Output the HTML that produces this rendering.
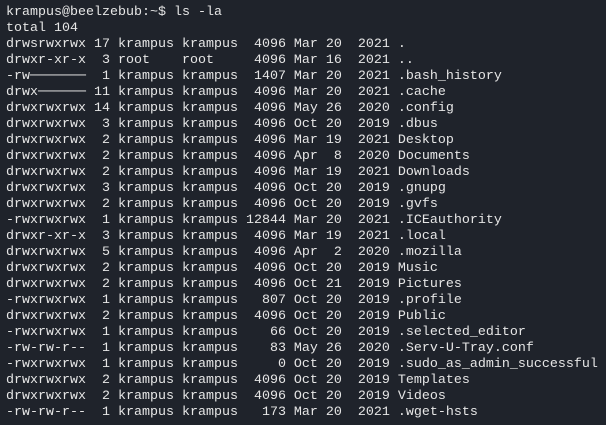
<!DOCTYPE html>
<html><head><meta charset="utf-8"><style>
html,body{margin:0;padding:0;background:#1f232b;width:606px;height:425px;overflow:hidden}
pre{margin:0;padding:5px 0 0 6px;font-family:"Liberation Mono","DejaVu Sans Mono",monospace;font-size:13.33px;line-height:16px;color:#e6e6e6}
</style></head><body><pre>krampus@beelzebub:~$ ls -la
total 104
drwsrwxrwx 17 krampus krampus  4096 Mar 20  2021 .
drwxr-xr-x  3 root    root     4096 Mar 16  2021 ..
-rw───────  1 krampus krampus  1407 Mar 20  2021 .bash_history
drwx────── 11 krampus krampus  4096 Mar 20  2021 .cache
drwxrwxrwx 14 krampus krampus  4096 May 26  2020 .config
drwxrwxrwx  3 krampus krampus  4096 Oct 20  2019 .dbus
drwxrwxrwx  2 krampus krampus  4096 Mar 19  2021 Desktop
drwxrwxrwx  2 krampus krampus  4096 Apr  8  2020 Documents
drwxrwxrwx  2 krampus krampus  4096 Mar 19  2021 Downloads
drwxrwxrwx  3 krampus krampus  4096 Oct 20  2019 .gnupg
drwxrwxrwx  2 krampus krampus  4096 Oct 20  2019 .gvfs
-rwxrwxrwx  1 krampus krampus 12844 Mar 20  2021 .ICEauthority
drwxr-xr-x  3 krampus krampus  4096 Mar 19  2021 .local
drwxrwxrwx  5 krampus krampus  4096 Apr  2  2020 .mozilla
drwxrwxrwx  2 krampus krampus  4096 Oct 20  2019 Music
drwxrwxrwx  2 krampus krampus  4096 Oct 21  2019 Pictures
-rwxrwxrwx  1 krampus krampus   807 Oct 20  2019 .profile
drwxrwxrwx  2 krampus krampus  4096 Oct 20  2019 Public
-rwxrwxrwx  1 krampus krampus    66 Oct 20  2019 .selected_editor
-rw-rw-r--  1 krampus krampus    83 May 26  2020 .Serv-U-Tray.conf
-rwxrwxrwx  1 krampus krampus     0 Oct 20  2019 .sudo_as_admin_successful
drwxrwxrwx  2 krampus krampus  4096 Oct 20  2019 Templates
drwxrwxrwx  2 krampus krampus  4096 Oct 20  2019 Videos
-rw-rw-r--  1 krampus krampus   173 Mar 20  2021 .wget-hsts</pre></body></html>
